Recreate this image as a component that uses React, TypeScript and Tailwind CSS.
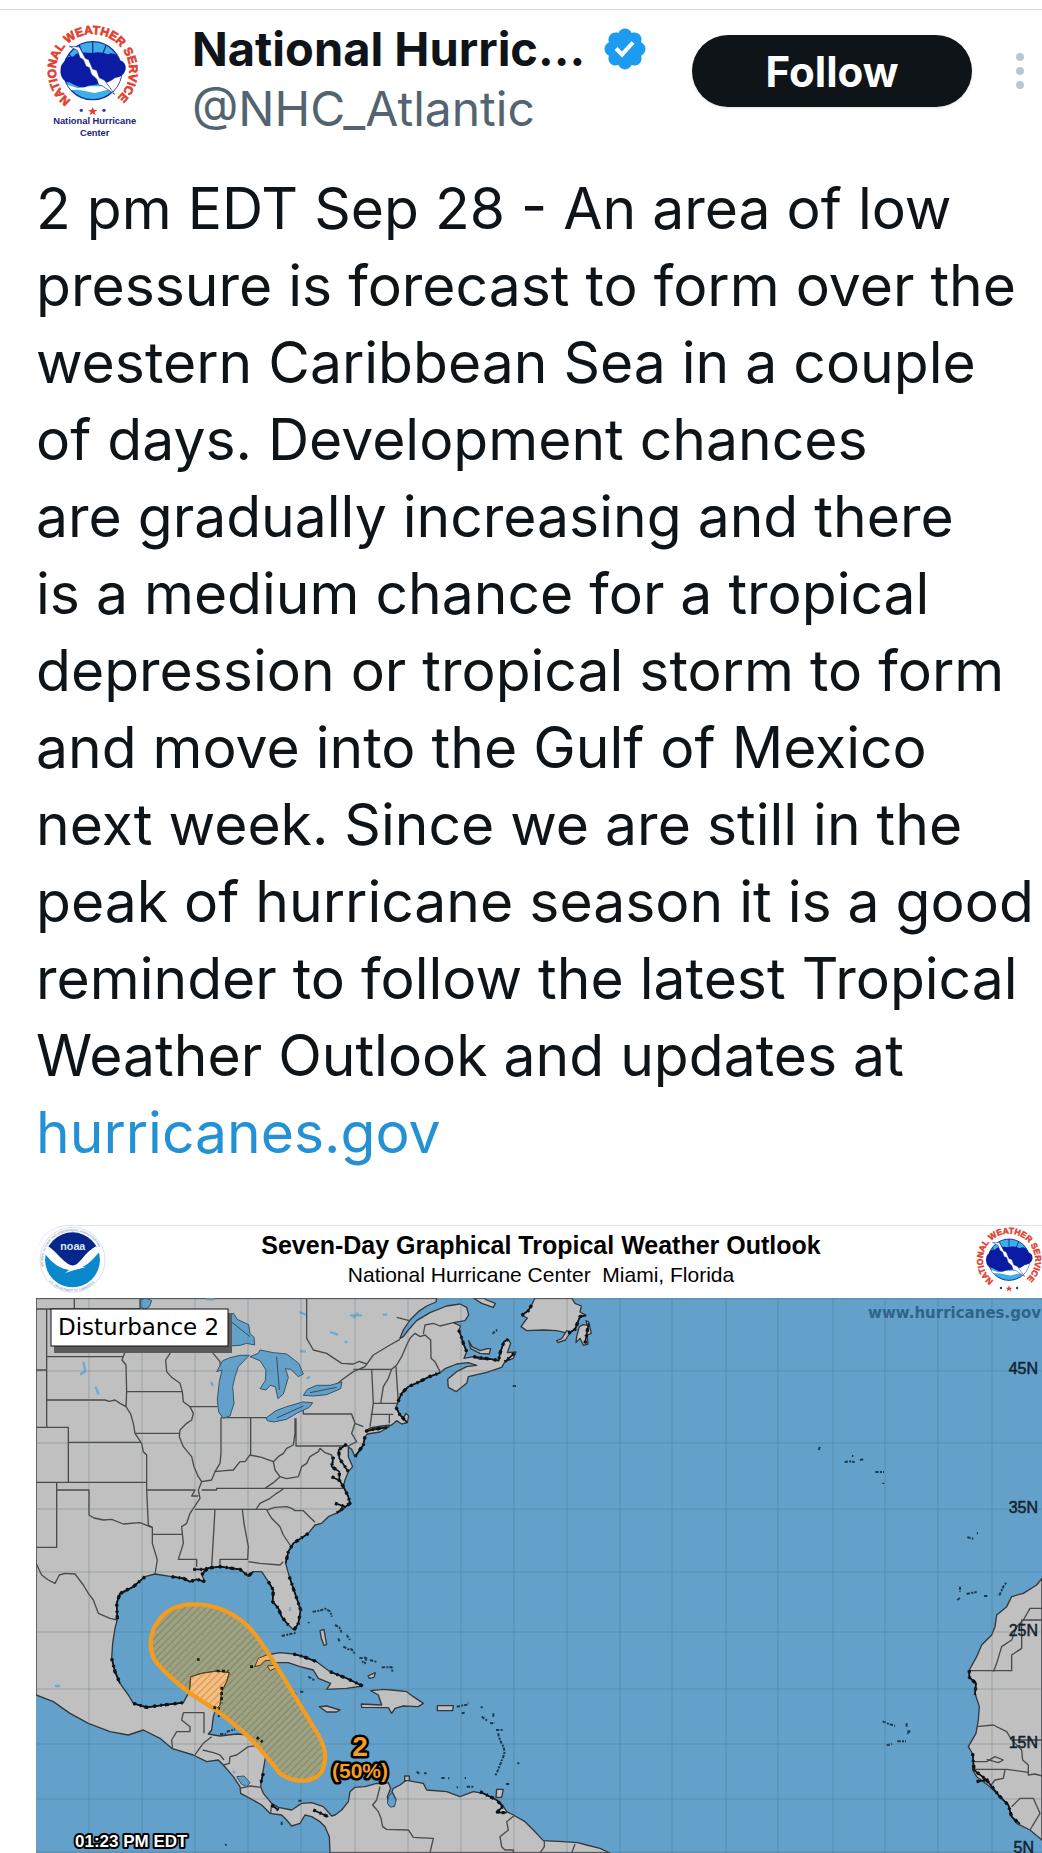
import React from "react";

const meridians = [89, 142, 195, 248, 301, 355, 408, 461, 514, 567, 620, 672, 726, 778, 833, 885, 938, 992];
const parallels = [1299, 1371, 1443, 1509, 1572, 1632, 1689, 1744, 1799, 1852];

const mainland =
  "M48 24H1250L1248 36 1220 48 1195 65 1170 90 1150 120 1140 145 1150 140 1165 120 1190 92 1230 68 1280 48 1320 42 1340 52 1346 75 1335 92 1300 98 1322 108 1316 120 1322 135 1330 160 1340 185 1332 205 1360 200 1380 208 1410 207 1435 212 1440 190 1452 155 1465 148 1472 160 1462 188 1488 186 1480 205 1455 215 1445 232 1400 247 1345 260 1340 280 1308 305 1285 292 1283 268 1310 245 1340 230 1370 226 1345 218 1310 222 1275 236 1260 248 1228 260 1195 277 1165 290 1145 310 1134 335 1128 352 1140 375 1150 385 1158 370 1166 378 1162 398 1145 402 1130 392 1115 405 1085 408 1050 414 1036 424 1100 412 1108 410 1080 426 1042 432 1035 440 1030 465 1005 500 995 478 985 470 985 500 998 530 985 545 975 570 970 590 985 620 990 640 960 665 925 680 905 700 885 705 865 730 820 760 805 785 797 820 808 860 825 910 842 960 835 1000 822 1020 805 1005 785 980 775 955 758 935 760 900 745 875 725 845 700 845 685 858 660 838 600 830 560 835 545 855 555 875 530 868 510 875 490 865 455 860 405 852 375 860 340 890 300 915 290 940 292 988 285 1015 278 1060 275 1105 285 1145 300 1180 325 1215 340 1240 380 1252 430 1245 465 1242 490 1238 505 1210 512 1160 545 1150 590 1143 625 1148 620 1175 605 1205 600 1245 590 1250 580 1280 575 1320 565 1332 600 1338 650 1332 690 1335 725 1355 740 1385 735 1410 728 1450 722 1490 730 1510 755 1540 775 1552 815 1560 845 1540 875 1538 910 1550 935 1578 945 1575 965 1560 985 1535 990 1505 1005 1492 1035 1490 1070 1480 1085 1482 1105 1478 1112 1495 1102 1520 1106 1545 1122 1550 1128 1528 1116 1505 1120 1495 1140 1485 1160 1470 1180 1475 1210 1480 1220 1500 1280 1505 1320 1520 1360 1505 1390 1510 1430 1530 1448 1545 1460 1565 1480 1575 1515 1595 1540 1620 1570 1652 1630 1655 1673 1658 1700 1665 1740 1675 1770 1689H930L928 1640 915 1610 900 1595 875 1580 855 1575 840 1600 815 1608 800 1590 785 1575 750 1570 725 1545 690 1525 662 1510 660 1490 640 1460 610 1425 595 1410 560 1415 520 1395 455 1375 420 1345 370 1320 325 1335 270 1325 205 1300 150 1270 100 1235 48 1215Z";

const africa =
  "M3066 865L3050 885 3010 910 2975 920 2960 950 2930 975 2925 1010 2915 1035 2885 1065 2870 1100 2848 1140 2848 1162 2868 1180 2865 1210 2878 1250 2875 1290 2868 1330 2845 1370 2860 1395 2860 1420 2858 1440 2870 1460 2910 1490 2940 1520 2965 1545 2975 1580 2990 1600 3030 1620 3066 1650Z";

const islands = [
  "M1360 24L1385 40 1420 52 1426 40 1400 30 1392 24Z",
  "M1545 24L1535 45 1525 62 1505 76 1522 84 1503 110 1520 122 1570 120 1610 122 1645 130 1665 118 1672 100 1680 80 1698 76 1680 66 1684 48 1665 40 1655 24Z",
  "M1678 110L1690 104 1702 106 1698 92 1706 96 1714 130 1702 135 1704 162 1690 166 1680 145 1668 158 1670 140Z",
  "M1610 152L1625 146 1640 122 1652 126 1636 150 1614 158Z",
  "M1346 152L1356 170 1380 182 1402 176 1412 176 1408 192 1380 190 1352 176Z",
  "M705 1128L715 1105 740 1095 780 1088 820 1092 850 1100 890 1115 930 1145 980 1165 1028 1188 980 1195 920 1198 932 1180 895 1165 880 1140 840 1130 805 1118 770 1118 735 1108 720 1125 705 1132Z",
  "M742 1128L760 1126 770 1136 750 1142Z",
  "M1052 1202L1090 1198 1115 1200 1160 1205 1180 1220 1210 1240 1195 1250 1150 1248 1125 1255 1115 1270 1105 1253 1025 1252 1024 1242 1085 1245 1075 1215Z",
  "M1252 1247H1300L1298 1262H1252Z",
  "M898 1250L920 1248 960 1260 950 1266 920 1266Z",
  "M1430 1498H1450L1445 1522H1428Z",
  "M900 1022L912 1018 916 1042 920 1064 912 1066 904 1045Z",
  "M1044 1158L1066 1148 1062 1162 1048 1165Z",
  "M1154 1458H1168V1472H1154Z",
];

const lakes = [
  "M625 72L640 70 652 88 686 104 690 130 702 142 704 165 680 160 660 166 625 168Z",
  "M590 245L608 212 630 203 660 196 688 196 672 212 655 230 645 260 638 290 642 340 630 378 610 385 596 366 592 330 598 275 606 240Z",
  "M690 200L715 190 720 180 760 188 800 192 836 220 850 252 835 260 812 238 796 236 805 262 790 312 774 326 766 290 750 286 738 300 720 296 736 272 738 240 720 212Z",
  "M738 384L768 362 800 350 848 336 878 338 868 352 830 370 800 388 762 396 742 392Z",
  "M850 316L862 298 890 286 930 286 966 276 962 296 920 314 880 318Z",
  "M1106 1520L1116 1508 1128 1530 1124 1548 1112 1552 1102 1540Z",
  "M650 1460L672 1458 690 1478 680 1490 664 1482Z",
  "M362 30L378 24 395 32 388 50 374 58 362 50Z",
];

const ponds =
  "M560 28h24M838 66l20 8M990 76h36M1000 84l14-16M1088 74h14M840 184h18M930 126l24 8M974 156h8M190 215l6 30-16 8M226 290l10 24M574 276l4 12M860 266l10-6M400 184h14M810 952v12M104 1188h16M638 1446h8";

const borders =
  "M48 57H360M163 24V57M360 24V57M80 57V412M48 240H80M80 200H310M80 330H255L268 334 285 330 300 340 318 350M314 170V188L306 210 318 225 320 305H485M320 305L318 350 332 372 340 400 345 430 365 460 370 485 380 495V600L385 705 397 712V760L412 810 405 852M345 430H478M455 172L450 190 437 210 440 245 455 262 480 280 487 305 490 335 510 350 520 370 515 390 500 400 480 420 478 440 490 470 515 500 522 530 535 560 545 575 535 600 540 625 510 670 500 700 485 710 490 760 475 808H530V830M510 350H592M520 172L540 182 575 185 600 215 602 235M48 412H145V577M145 457H365M48 577H380M110 577V772H48M110 600H207V675L222 684 250 690 275 688 310 702 360 698 395 712M380 600H525L515 618H535M397 733H488M603 383V490L600 520 585 545 575 570 545 575M603 383H740M692 383V495M585 545L615 542 640 540 660 515 675 515 690 495 725 502 760 515 775 500 790 490 800 475 820 465 825 430V385M850 358V372H995L1005 400 995 430 1010 455 985 468M828 385V468H985M760 515L765 540 780 560 800 566 835 560 845 530 860 520 870 500 895 485 900 475 915 488 935 495 940 520M780 560L760 578 735 595M545 600H590V595H970M525 658H740M708 658L720 640 750 625 770 610 790 597M585 658L575 830M667 658L672 700 685 770 683 808H600V825M685 815L720 820 780 825 790 815M740 660L765 652 800 650 815 655 825 662 850 662 885 697M740 660L755 685 780 710 790 735 810 765M860 24V145L880 180 920 190 965 220 1000 222 1018 214 1040 222M940 292L965 270 1000 245 1035 230 1060 195 1110 165 1140 148M1000 238H1115M1055 238L1060 340 1050 410M1115 238L1105 265 1090 290 1082 340M1128 230L1135 340M1058 340H1132M1052 373H1120M1108 373V400M1115 238L1130 225 1145 200 1160 165 1170 145 1185 130 1200 140 1215 135 1232 150 1233 205 1245 215 1260 245M1210 132L1215 105 1240 100 1260 108 1300 98M1130 82L1168 92M995 373L1005 400 1030 410M48 820L65 855 85 870 105 880 118 855 135 850 165 852 190 885 205 910 220 930 235 970 270 985 292 990M490 1268H552V1330M490 1268L485 1290 510 1310V1325H470L455 1350 458 1378M525 1395L535 1380 550 1360 575 1340M548 1380L580 1388 600 1395 612 1410M610 1425L628 1420 630 1400 650 1395 685 1370 735 1365M660 1495L690 1488 722 1492M755 1540L752 1570M1080 1490L1070 1530 1058 1545 1075 1565 1083 1585 1088 1610 1100 1618 1165 1620 1180 1642 1240 1645 1230 1689M1485 1575L1460 1595 1465 1620 1440 1640 1445 1670 1455 1680H1480V1689M1573 1652V1670L1560 1689M1665 1662L1655 1689M2850 1142H2975V1095L3005 1075V990H3066M2920 1145L2930 1120 2945 1070 2975 1050 2990 1010 3010 990 3030 955H3066M2870 1310L2920 1305 2960 1325 2975 1350H3066M2975 1350L3005 1380 3008 1410 3025 1425V1455L3045 1452 3066 1458M2860 1438H2960L3025 1447M2860 1415L2900 1415 2925 1400 2950 1410 2935 1418 2900 1408M2910 1490L2925 1470 2950 1465 2955 1440M2975 1550L3000 1525H3040L3060 1570 3030 1620";

const roughCoast =
  "M1036 424L1060 418 1100 412M1134 335L1145 310 1165 290 1195 277 1228 260 1260 248M1128 352L1140 375 1162 398M1316 120L1322 135 1330 160 1340 185M1360 200L1410 207 1436 212 1440 190 1452 155 1465 148M1483 190L1455 215M1035 440L1030 465 1005 500M980 462L956 480 958 505 975 530 985 545M940 500L935 530 958 545 958 570 970 590 985 620 990 640 950 668M935 560L960 572M945 640L975 650M865 730L820 760 805 785 797 820M808 860L825 910 842 960 835 1000 822 1020M745 875L760 900 758 935 775 955 785 980 805 1005M545 855L560 835 600 830 660 838 685 858 700 845M455 860L490 865 510 875 530 868 555 875 M520 838H560L545 855M375 860L340 890 300 910 290 940 292 988M275 1105L285 1145 300 1180M340 1240L380 1252 430 1245 490 1238M1505 76L1525 62 1535 45M1645 130L1665 118 1672 100 1680 80 1698 76M1695 160L1706 100M930 1145L980 1165 1028 1188M820 1092L850 1100 890 1115M730 1450L722 1480M755 1545L775 1560M880 1560L925 1580M1380 1505L1430 1530 1448 1550 1430 1568H1460M2848 1140V1162L2868 1180 2865 1215M2858 1390L2862 1440 2900 1470 2940 1520 2965 1545 2975 1580 3000 1602M2870 1475L2905 1468M595 1245L600 1260 596 1280";

const islets =
  "M878 965L900 962 915 956 930 964 936 980M945 1005L958 1012 965 1028M980 1035L990 1050M955 1045L960 1058M970 1070L985 1078 995 1078 1005 1092M1018 1105L1040 1102 1035 1120 1026 1114M1050 1110L1070 1116M1085 1132L1115 1132 1118 1148M865 1160L885 1172M840 1205H852M1310 1250L1340 1244 1345 1238M1325 1270L1334 1268M1382 1252H1388M1385 1280L1402 1292M1420 1270V1280M1410 1300L1425 1298M1428 1320H1450M1434 1330L1440 1350 1450 1370 1454 1385 1450 1400 1442 1420 1432 1445 1425 1458M1190 1445L1200 1452M1212 1450H1220M1264 1464H1274M1284 1465H1288M1334 1464H1338M1310 1492H1314M1340 1490H1360M1492 1420H1498M1458 1482H1468M1418 132L1424 124 1432 120M1478 288H1490M785 1038L830 1028M866 996V1000M598 1205H606M820 1215L830 1210M620 1325L645 1318M600 1332H618M2396 480L2400 470M2474 516L2490 514 2504 516M2496 498H2500M2520 510L2530 508M2566 546L2592 546M2590 578V582M2842 742L2860 746M2870 730H2874M2820 890V906M2812 930L2820 924M2840 912L2870 906M2892 918H2902M2938 916L2950 890 2960 876M2588 1294L2602 1300 2625 1308M2660 1300V1310M2662 1324H2668V1330H2662M2600 1366L2616 1362M2632 1354L2658 1354M785 1595V1608M615 1664H620M835 1532H845";

const cone =
  "M525 943C600 943 650 975 690 1015C730 1060 750 1100 780 1145L895 1335C915 1370 925 1405 905 1445C880 1480 820 1480 780 1450L735 1395C700 1350 650 1305 590 1262L510 1210C465 1175 430 1145 405 1112C385 1075 390 1030 410 1000C435 960 470 943 525 943Z";

const yucatan = "M508 1208L512 1160 545 1150 590 1143 628 1148 620 1175 605 1205 600 1245 590 1256Z";

function NwsSeal({ id, caption }: { id: string; caption?: boolean }) {
  return (
    <svg
      viewBox={caption ? "132 60 312 360" : "145 73 278 278"}
      className={caption ? "h-[120px] w-[104px] shrink-0" : "size-[66px] shrink-0"}
      role="img"
      aria-label="National Weather Service"
    >
      <defs>
        <path id={id} d="M219 304A110 110 0 1 1 349 304" />
        <clipPath id={`${id}-disc`}>
          <circle cx="284" cy="215" r="87" />
        </clipPath>
      </defs>
      <text fill="#e0402f" stroke="#e0402f" strokeWidth="2" fontSize="36" fontWeight="700" fontFamily="Liberation Sans, sans-serif">
        <textPath href={`#${id}`}>NATIONAL WEATHER SERVICE</textPath>
      </text>
      <circle cx="284" cy="215" r="87" fill="#3eaee9" stroke="#16329a" strokeWidth="4" />
      <g clipPath={`url(#${id}-disc)`}>
        <path d="M284 120V170M240 130L256 170M328 130L312 170M206 160L230 185M362 160L338 185" stroke="#16329a" strokeWidth="4" />
        <path d="M190 240L210 258 240 268 275 262 310 262 345 240 385 225V262L360 280 330 272 290 282 240 272 200 274Z" fill="#fff" />
      </g>
      <path d="M188 208C190 192 200 190 202 180C212 168 224 180 232 166C246 158 268 160 284 162C304 156 322 164 330 166C346 156 362 172 364 184C380 186 386 202 382 214C378 230 362 236 350 236C340 248 322 252 306 252C290 262 272 256 262 264C242 268 226 256 214 250C196 250 184 230 188 208Z" fill="#0b1ba4" />
      <path d="M214 142L244 144 262 178 272 182 284 210 296 214 304 236 320 244 350 286 312 260 302 258 296 240 280 226 274 206 264 202 256 182 246 176 238 154Z" fill="#fff" stroke="#16329a" strokeWidth="2" />
      <g fill="#2a3bb0">
        <circle cx="250" cy="334" r="5" />
        <circle cx="318" cy="334" r="5" />
      </g>
      <path d="M284 324L288 333H298L290 339 293 349 284 343 275 349 278 339 270 333H280Z" fill="#e0402f" />
      {caption && (
        <g fill="#1c2280" fontSize="28" fontWeight="700" fontFamily="Liberation Sans, sans-serif" textAnchor="middle">
          <text x="290" y="376">National Hurricane</text>
          <text x="290" y="411">Center</text>
        </g>
      )}
    </svg>
  );
}

function NoaaSeal() {
  return (
    <svg viewBox="115 50 200 200" className="size-[67px] shrink-0" role="img" aria-label="NOAA">
      <defs>
        <path id="noaa-top" d="M129 172A88 88 0 1 1 301 172" />
        <path id="noaa-bottom" d="M133 198A95 95 0 0 0 297 198" />
        <clipPath id="noaa-disc">
          <circle cx="215" cy="151" r="82" />
        </clipPath>
      </defs>
      <circle cx="215" cy="151" r="97" fill="#fff" stroke="#c3d3e6" strokeWidth="2" />
      <g fill="#5d78a8" fontSize="9" fontFamily="Liberation Sans, sans-serif">
        <text><textPath href="#noaa-top">NATIONAL OCEANIC AND ATMOSPHERIC ADMINISTRATION</textPath></text>
        <text><textPath href="#noaa-bottom" startOffset="20">U.S. DEPARTMENT OF COMMERCE</textPath></text>
      </g>
      <g clipPath="url(#noaa-disc)">
        <path d="M130 65H300V110C270 125 250 160 222 172H206C180 150 160 120 130 108Z" fill="#06268c" />
        <path d="M130 130C155 160 175 180 215 182C255 176 275 150 300 122V240H130Z" fill="#0a88cb" />
        <path d="M130 104C160 116 178 148 200 162C212 170 222 170 232 160C252 140 262 118 300 104V124C280 134 262 160 242 170L252 174C228 178 212 184 194 190L208 178C180 178 154 154 130 130Z" fill="#fff" />
      </g>
      <text x="216" y="123" fill="#dfe8f6" fontSize="32" fontWeight="700" fontFamily="Liberation Sans, sans-serif" textAnchor="middle">noaa</text>
    </svg>
  );
}

function VerifiedBadge() {
  return (
    <svg viewBox="0 0 24 24" className="size-12 shrink-0" fill="#1d9bf0" role="img" aria-label="Verified account">
      <path d="M22.25 12c0-1.43-.88-2.67-2.19-3.34.46-1.39.2-2.9-.81-3.91s-2.52-1.27-3.91-.81c-.66-1.31-1.91-2.19-3.34-2.19s-2.67.88-3.33 2.19c-1.4-.46-2.91-.2-3.92.81s-1.26 2.52-.8 3.91c-1.31.67-2.2 1.91-2.2 3.34s.89 2.67 2.2 3.34c-.46 1.39-.21 2.9.8 3.91s2.52 1.26 3.91.81c.67 1.31 1.91 2.19 3.34 2.19s2.68-.88 3.34-2.19c1.39.45 2.9.2 3.91-.81s1.27-2.52.81-3.91c1.31-.67 2.19-1.91 2.19-3.34zm-11.71 4.2L6.8 12.46l1.41-1.42 2.26 2.26 4.8-5.23 1.47 1.36-6.2 6.77z" />
    </svg>
  );
}

function OutlookMap() {
  return (
    <svg viewBox="36 1298 1006 555" className="block w-full" role="img" aria-label="Tropical weather outlook map of the Atlantic">
      <defs>
        <pattern id="hatch" width="15" height="15" patternUnits="userSpaceOnUse" patternTransform="rotate(45)">
          <path d="M4 0V15" stroke="#7f835f" strokeWidth="3" />
        </pattern>
        <pattern id="hatch-land" width="15" height="15" patternUnits="userSpaceOnUse" patternTransform="rotate(45)">
          <path d="M4 0V15" stroke="#d08f45" strokeWidth="3" />
        </pattern>
      </defs>
      <rect x="36" y="1298" width="1006" height="555" fill="#63a1ca" />
      <g transform="translate(20 1290) scale(0.33333)" strokeLinejoin="round">
        <g fill="#c0c0c0" stroke="#33383c" strokeWidth="4">
          <path d={mainland} />
          <path d={africa} />
          {islands.map((d) => <path key={d} d={d} />)}
        </g>
        <path d={borders} fill="none" stroke="#4a4a4a" strokeWidth="4" />
        <g fill="#63a1ca" stroke="#33536a" strokeWidth="3">
          {lakes.map((d) => <path key={d} d={d} />)}
        </g>
        <path d="M770 200L778 300M690 140L630 92M770 384L850 348M870 308L950 292" fill="none" stroke="#3b4a55" strokeWidth="3" />
        <path d={ponds} fill="none" stroke="#6fa9cf" strokeWidth="7" />
        <path d={roughCoast} fill="none" stroke="#0b1218" strokeWidth="5" />
        <path d={roughCoast} fill="none" stroke="#0b1218" strokeWidth="10" strokeDasharray="8 13 5 9 11 16" />
        <path d={islets} fill="none" stroke="#1f3a4d" strokeWidth="6" strokeDasharray="10 4 6 3" />
      </g>
      <g stroke="#4d6779" strokeOpacity="0.35" strokeWidth="1">
        {meridians.map((x) => <path key={x} d={`M${x} 1298V1853`} />)}
        {parallels.map((y) => <path key={y} d={`M36 ${y}H1042`} />)}
      </g>
      <g transform="translate(20 1290) scale(0.33333)">
        <path d={cone} fill="#9ca283" />
        <path d={cone} fill="url(#hatch)" />
        <g stroke="#4f4021" strokeWidth="3">
          <path d={yucatan} fill="#f6bf83" />
          <path d={yucatan} fill="url(#hatch-land)" />
          <path d="M704 1130L715 1105 740 1095 752 1098 758 1110 735 1112 720 1126Z" fill="#f2b36b" />
          <path d="M742 1128L760 1126 768 1134 750 1142Z" fill="#f2b36b" />
        </g>
        <path d={cone} fill="none" stroke="#f39c1f" strokeWidth="13" />
        <path d="M590 1143H625M605 1190V1240M580 1252L600 1256M690 1130H704M535 1105V1112M710 1342L728 1356" fill="none" stroke="#1c1a10" strokeWidth="8" strokeDasharray="9 7" />
      </g>
      <g fontFamily="Liberation Sans, sans-serif" fontSize="16" fill="#14232e" stroke="#14232e" strokeWidth="0.5" textAnchor="end">
        <text x="1038" y="1374">45N</text>
        <text x="1038" y="1513">35N</text>
        <text x="1038" y="1636">25N</text>
        <text x="1038" y="1748">15N</text>
        <text x="1034" y="1853">5N</text>
      </g>
      <text x="1041" y="1318" fontFamily="DejaVu Sans, sans-serif" fontSize="15" fontWeight="700" fill="#2f6389" textAnchor="end">
        www.hurricanes.gov
      </text>
      <rect x="54" y="1313" width="178" height="40" fill="#5b5b5b" />
      <rect x="51" y="1309" width="177" height="37" fill="#fff" stroke="#111" strokeWidth="1" />
      <text x="58" y="1335" fontFamily="DejaVu Sans, sans-serif" fontSize="23" fill="#000">Disturbance 2</text>
      <g fontFamily="Liberation Sans, sans-serif" fontWeight="700" strokeLinejoin="round" style={{ paintOrder: "stroke" }} stroke="#000" strokeWidth="5">
        <text x="360" y="1756" fontSize="28" fill="#f59d22" textAnchor="middle">2</text>
        <text x="360" y="1778" fontSize="21" fill="#f59d22" textAnchor="middle">(50%)</text>
        <text x="75" y="1847" fontSize="17" fill="#fff" strokeWidth="4">01:23 PM EDT</text>
      </g>
    </svg>
  );
}

export default function App() {
  return (
    <article className="overflow-hidden bg-white pt-[9px] font-['Inter',sans-serif] text-[#0f1419]">
      <header className="flex items-start border-t border-[#d5dade] pl-[42px] pr-2.5 pt-[9px]">
        <NwsSeal id="avatar-ring" caption />
        <div className="ml-[46px] min-w-0 leading-[60px]">
          <div className="flex h-[60px] items-center gap-4 whitespace-nowrap">
            <span className="text-[47px] font-bold">National Hurric...</span>
            <VerifiedBadge />
          </div>
          <div className="text-[48px] text-[#536471]">@NHC_Atlantic</div>
        </div>
        <button type="button" className="ml-auto mt-4 h-[72px] w-[280px] shrink-0 rounded-full bg-[#0f1419] text-[42px] font-bold text-white shadow-sm">
          Follow
        </button>
        <button type="button" aria-label="More" className="ml-9 mt-4 flex h-[72px] w-6 shrink-0 flex-col items-center justify-center gap-1.5">
          <span className="size-2 rounded-full bg-[#b9c8cf]" />
          <span className="size-2 rounded-full bg-[#b9c8cf]" />
          <span className="size-2 rounded-full bg-[#b9c8cf]" />
        </button>
      </header>

      <p className="mt-[31px] whitespace-nowrap pl-9 text-[57px] leading-[77px]">
        2 pm EDT Sep 28 - An area of low<br />
        pressure is forecast to form over the<br />
        western Caribbean Sea in a couple<br />
        of days. Development chances<br />
        are gradually increasing and there<br />
        is a medium chance for a tropical<br />
        depression or tropical storm to form<br />
        and move into the Gulf of Mexico<br />
        next week. Since we are still in the<br />
        peak of hurricane season it is a good<br />
        reminder to follow the latest Tropical<br />
        Weather Outlook and updates at<br />
        <a href="#hurricanes" className="text-[#2391d3]">hurricanes.gov</a>
      </p>

      <figure className="ml-9 mt-[54px] overflow-hidden rounded-tl-[32px] border-t border-[#dde2e5]">
        <figcaption className="flex h-[72px] items-start pl-[3px]">
          <NoaaSeal />
          <div className="flex-1 pt-1 text-center font-['Liberation_Sans',sans-serif] text-black">
            <div className="text-[25px] font-bold leading-[30px]">Seven-Day Graphical Tropical Weather Outlook</div>
            <div className="whitespace-pre text-[21px] leading-[30px]">{"National Hurricane Center  Miami, Florida"}</div>
          </div>
          <NwsSeal id="map-ring" />
        </figcaption>
        <OutlookMap />
      </figure>
    </article>
  );
}
